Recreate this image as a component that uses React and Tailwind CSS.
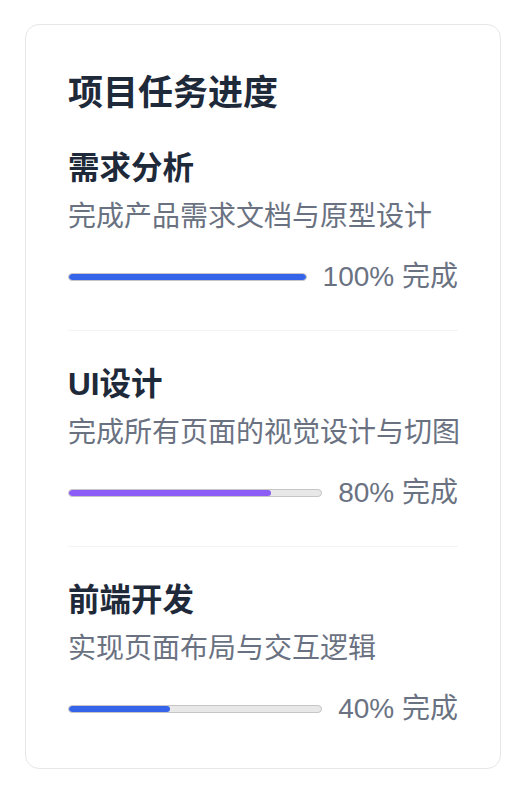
const tasks = [
  { name: '需求分析', desc: '完成产品需求文档与原型设计', progress: 100, color: 'bg-[#3563e9]' },
  { name: 'UI设计', desc: '完成所有页面的视觉设计与切图', progress: 80, color: 'bg-[#8b5cf6]' },
  { name: '前端开发', desc: '实现页面布局与交互逻辑', progress: 40, color: 'bg-[#3563e9]' },
];

function TaskItem({ task, last }) {
  return (
    <div className={last ? 'pt-[30px]' : 'pt-[30px] pb-[36px] border-b border-gray-100 first:pt-0'}>
      <h3 className="text-[31.5px] leading-[47px] font-semibold text-gray-800">{task.name}</h3>
      <p className="mt-1 text-[28px] leading-[42px] text-gray-500 whitespace-nowrap">{task.desc}</p>
      <div className="mt-[22px] flex items-center gap-4">
        <div className="flex-1 h-2 rounded-full bg-[#e8e8e8] border border-[#c6c6c6] overflow-hidden">
          <div className={`h-full rounded-full ${task.color}`} style={{ width: `${task.progress}%` }} />
        </div>
        <span className="text-[28px] leading-[34px] text-gray-500">{task.progress}% 完成</span>
      </div>
    </div>
  );
}

export default function App() {
  return (
    <div
      className="bg-white min-h-screen pt-6"
      style={{ fontFamily: '"Liberation Sans", "Noto Sans CJK SC", sans-serif' }}
    >
      <div className="ml-[25px] w-[476px] bg-white border border-gray-200 rounded-[14px] p-[42px]">
        <h2 className="text-[35px] leading-[52px] font-bold text-gray-800">项目任务进度</h2>
        <div className="mt-[26px]">
          {tasks.map((t, i) => (
            <TaskItem key={t.name} task={t} last={i === tasks.length - 1} />
          ))}
        </div>
      </div>
    </div>
  );
}
